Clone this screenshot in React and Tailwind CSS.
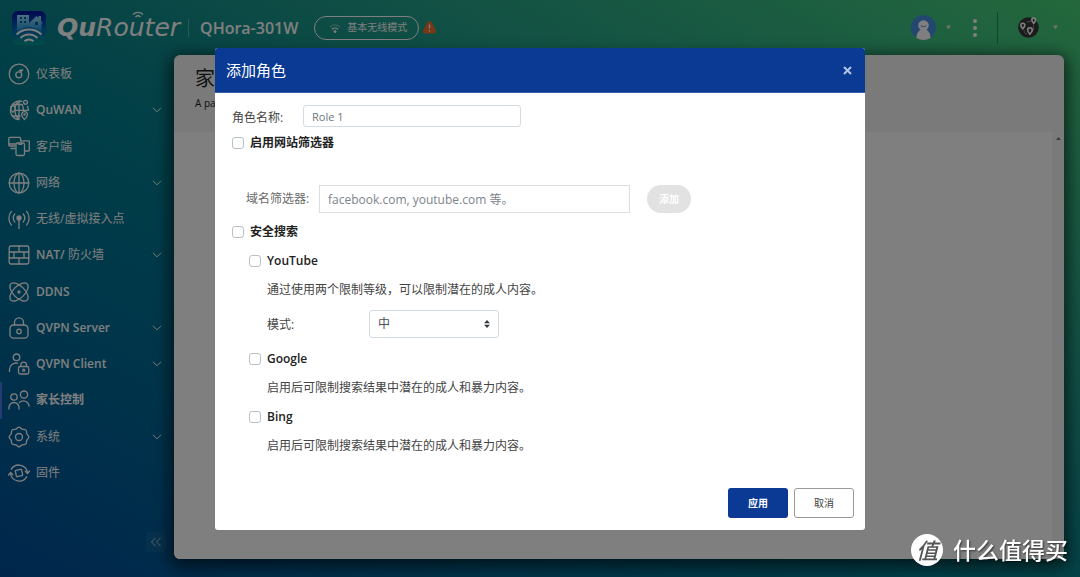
import { useState } from 'react';

const NAV = [
  { id: 'dashboard', label: '仪表板' },
  { id: 'quwan', name: 'QuWAN', expandable: true },
  { id: 'clients', label: '客户端' },
  { id: 'network', label: '网络', expandable: true },
  { id: 'wireless', label: '无线/虚拟接入点' },
  { id: 'firewall', name: 'NAT/ ', label: '防火墙', expandable: true },
  { id: 'ddns', name: 'DDNS' },
  { id: 'vpnServer', name: 'QVPN Server', expandable: true },
  { id: 'vpnClient', name: 'QVPN Client', expandable: true },
  { id: 'parental', name: '家长控制', active: true },
  { id: 'system', label: '系统', expandable: true },
  { id: 'firmware', label: '固件' },
];

const ICONS = {
  dashboard: (
    <>
      <circle cx="11" cy="11" r="9.8" />
      <circle cx="10.8" cy="11.8" r="3" />
      <path d="M12.6 9.4 14.4 7M11.5 7.400l3.200-.6" />
    </>
  ),
  quwan: (
    <>
      <path d="M14 2.300A9.300 9.300 0 1 0 11 20.600M11 2v18.600M11 2C7.800 4.500 7 8 7 11.300c0 3.500 1.200 7 4 9.300M5 5.500h9M8 11.300h12M4 17h8M19.500 7.500c.6 1.200.9 2.500.9 3.800" />
      <path d="M14 5.500c1.200 1.800 1.500 3.600 1.500 5.800" />
      <circle cx="17.500" cy="3.200" r="1.900" />
      <path d="M2.600 9.200a2.300 2.300 0 0 1 4.600 0c0 1.700-2.300 4.100-2.300 4.100S2.600 10.900 2.600 9.200z" />
      <path d="M13.600 15.600a2.900 2.900 0 0 1 5.800 0c0 2.200-2.900 5-2.900 5s-2.900-2.800-2.900-5z" />
      <circle cx="16.500" cy="15.600" r=".6" />
    </>
  ),
  clients: (
    <>
      <path d="M7 10H1.800A1 1 0 0 1 .8 9V2.400a1 1 0 0 1 1-1h9.800a1 1 0 0 1 1 1V5M.8 8h6.500M3 12.500h4" />
      <path d="M13.500 4.800h7a.8.8 0 0 1 .8.8v8.600a.8.8 0 0 1-.8.8H17" />
      <rect x="8" y="7" width="8.500" height="12.500" rx="1.400" />
      <path d="M11 7v1.400h2.500V7" />
    </>
  ),
  network: (
    <>
      <circle cx="11" cy="11" r="9.800" />
      <ellipse cx="11" cy="11" rx="5" ry="9.800" />
      <path d="M11 1.200v19.600M1.200 11h19.600" />
    </>
  ),
  wireless: (
    <>
      <circle cx="11" cy="10" r="2" fill="currentColor" />
      <path d="M11 11v9.500M6.800 6a5.800 5.800 0 0 0 0 8M15.200 6a5.800 5.800 0 0 1 0 8M3.400 3.400a10.500 10.500 0 0 0 0 13.600M18.600 3.400a10.500 10.500 0 0 1 0 13.600" />
    </>
  ),
  firewall: (
    <>
      <rect x="1.200" y="2" width="19.600" height="18" rx="1.800" />
      <path d="M1.200 8h19.600M1.200 14h19.600M11 2v6M6 8v6M16 8v6M11 14v6" />
    </>
  ),
  ddns: (
    <>
      <ellipse cx="11" cy="11" rx="11.500" ry="5.800" transform="rotate(45 11 11)" />
      <ellipse cx="11" cy="11" rx="11.500" ry="5.800" transform="rotate(-45 11 11)" />
      <circle cx="11" cy="11" r="1" fill="currentColor" />
    </>
  ),
  vpnServer: (
    <>
      <rect x="2" y="8" width="18" height="13.200" rx="3.600" />
      <path d="M6.500 8V5.300a4.500 4.500 0 0 1 9 0V8" />
      <circle cx="11" cy="14.400" r="2.200" />
    </>
  ),
  vpnClient: (
    <>
      <circle cx="8.500" cy="4.300" r="3.300" />
      <path d="M1.500 18.500v-2a6.500 6.500 0 0 1 8-6.300" />
      <rect x="10.500" y="13.500" width="10.300" height="7.500" rx="1.800" />
      <path d="M12.800 13.500v-1.400a2.900 2.900 0 0 1 5.800 0v1.400" />
      <circle cx="15.700" cy="17.200" r="1" />
    </>
  ),
  parental: (
    <>
      <circle cx="6" cy="8" r="3.200" />
      <circle cx="16" cy="5.600" r="3.600" />
      <path d="M1 20v-1.500a5 5 0 0 1 10 0V20M11.500 13.500a5.600 5.600 0 0 1 9.500 3.500" />
    </>
  ),
  system: (
    <>
      <path d="M11 1.200c1.500 0 1.800 1.400 3.200 2 1.400.5 2.600-.2 3.700.9s.4 2.300.9 3.700c.6 1.400 2 1.700 2 3.200s-1.400 1.800-2 3.200c-.5 1.400.2 2.600-.9 3.700s-2.300.4-3.700.9c-1.400.6-1.700 2-3.200 2s-1.800-1.400-3.200-2c-1.400-.5-2.600.2-3.700-.9s-.4-2.300-.9-3.700c-.6-1.400-2-1.700-2-3.200s1.400-1.800 2-3.200c.5-1.400-.2-2.600.9-3.700s2.300-.4 3.700-.9c1.400-.6 1.700-2 3.200-2z" />
      <circle cx="11" cy="11" r="3.500" />
    </>
  ),
  firmware: (
    <>
      <path d="M3.300 7.200a8.800 8.800 0 0 1 16.200 3.600M18.700 14.800A8.800 8.800 0 0 1 2.500 11.500" />
      <path d="M17.300 9.300l2.200 2.200 2-2.500M4.900 12.700 2.600 10.500.6 13" />
      <rect x="7.800" y="7.800" width="6.400" height="6.400" rx=".8" transform="rotate(-12 11 11)" />
    </>
  ),
};

function NavIcon({ name }) {
  return (
    <svg className="size-[22px] shrink-0 overflow-visible" viewBox="0 0 22 22" fill="none" stroke="currentColor" strokeWidth="1.3" strokeLinecap="round" strokeLinejoin="round" aria-hidden="true">
      {ICONS[name]}
    </svg>
  );
}

function AppLogo() {
  return (
    <svg className="size-[34px] shrink-0" viewBox="0 0 34 34" aria-hidden="true">
      <defs>
        <linearGradient id="logoBg" x1="0" y1="0" x2="0" y2="1">
          <stop offset="0" stopColor="#0012a0" />
          <stop offset="0.5" stopColor="#0060b8" />
          <stop offset="1" stopColor="#009a90" />
        </linearGradient>
        <linearGradient id="logoHouse" x1="0" y1="0" x2="0" y2="1">
          <stop offset="0" stopColor="#9fe0ff" />
          <stop offset="1" stopColor="#1090d0" />
        </linearGradient>
      </defs>
      <rect width="34" height="34" rx="6" fill="url(#logoBg)" />
      <path d="M5 4h12v8l7.500-7 2 2V5H29v5l2 2.500h-1.500V21C21 14.500 13 14.500 5 21z" fill="url(#logoHouse)" />
      <path d="M8 6h2v2H8zM12 6h2v2h-2zM8 10h2v2H8zM12 10h2v2h-2zM23 11h3v3h-3z" fill="#0058a8" />
      <path d="M4.500 23.500a18 18 0 0 1 25 0M8.500 27a12 12 0 0 1 17 0M12.500 30.300a6.500 6.500 0 0 1 9 0" fill="none" stroke="#fff" strokeWidth="2" />
    </svg>
  );
}

function Caret() {
  return (
    <svg className="h-[5px] w-[5px]" viewBox="0 0 6 5" aria-hidden="true">
      <path d="M0 0h6L3 5z" fill="#d8e4dc" />
    </svg>
  );
}

function TopBar() {
  return (
    <header className="flex h-[55px] items-center pr-[22px] pl-3 text-white">
      <AppLogo />
      <span className="relative ml-[11px] font-['DejaVu_Sans',sans-serif] text-[25px] leading-none italic">
        <b>Qu</b>Router
        <svg className="absolute -top-1 left-[75px] h-2 w-3" viewBox="0 0 12 8" fill="none" stroke="currentColor" strokeWidth="1.3" aria-hidden="true">
          <path d="M1 3.500a7 7 0 0 1 10 0M3.500 6a3.600 3.600 0 0 1 5 0" />
        </svg>
      </span>
      <span className="ml-2 h-[18px] w-px bg-white/30" />
      <span className="ml-[11px] text-[16px] font-semibold">QHora-301W</span>
      <button type="button" className="ml-4 flex h-6 items-center gap-1.5 rounded-full border border-white px-[11px] text-[10px]">
        <svg className="ml-[3px] h-2.5 w-3" viewBox="0 0 12 10" fill="none" stroke="currentColor" aria-hidden="true">
          <path d="M1 4a7 7 0 0 1 10 0" opacity=".5" />
          <path d="M3 6.300a4.300 4.300 0 0 1 6 0" strokeWidth="1.200" />
          <circle cx="6" cy="8.500" r="1" fill="currentColor" />
        </svg>
        基本无线模式
      </button>
      <svg className="ml-1 h-[13px] w-[13px]" viewBox="0 0 13 13" aria-hidden="true">
        <path d="M6.500 0c1 0 1.700.7 2.500 2l3.500 6.500c1 2.200.3 4-2 4h-8c-2.300 0-3-1.800-2-4L4 2C4.800.7 5.500 0 6.500 0z" fill="#f0702c" />
        <path d="M6.500 3.500v4M6.500 9v1.500" stroke="#fff" strokeWidth="1.400" />
      </svg>
      <div className="ml-auto flex items-center">
        <button type="button" aria-label="Account" className="flex items-center gap-2.5">
          <svg className="size-[25px]" viewBox="0 0 25 25" aria-hidden="true">
            <circle cx="12.500" cy="12.500" r="12.500" fill="#468fe0" />
            <path d="M5.500 23c0-4.500 2-7 4-8.200a5.300 5.300 0 1 1 6 0c2 1.200 4 3.700 4 8.200-4 2.600-10 2.600-14 0z" fill="#fff" />
            <path d="M9.800 10.500c1.500 1.600 3.900 1.600 5.400 0" fill="none" stroke="#468fe0" />
          </svg>
          <Caret />
        </button>
        <button type="button" aria-label="More" className="ml-[22px] flex w-1 flex-col gap-[3px]">
          <span className="size-1 rounded-full bg-white" />
          <span className="size-1 rounded-full bg-white" />
          <span className="size-1 rounded-full bg-white" />
        </button>
        <span className="ml-5 h-8 w-px bg-black/30" />
        <button type="button" aria-label="QuWAN" className="ml-5 flex items-center gap-[14px]">
          <svg className="size-[21px]" viewBox="0 0 21 21" aria-hidden="true">
            <circle cx="10.500" cy="10.500" r="10.300" fill="#363636" />
            <path d="M6 13c0 2 1 4 3 4M9 5l4-1M14 15c2-2 2-5 1-7" fill="none" stroke="#999" />
            <g fill="none" stroke="#fff" strokeWidth="1.600">
              <path d="M2.800 8.200a2 2 0 0 1 4 0c0 1.500-2 3.600-2 3.600s-2-2.100-2-3.600z" />
              <path d="M13.800 3a1.900 1.900 0 0 1 3.800 0c0 1.400-1.900 3.400-1.900 3.400S13.800 4.400 13.800 3z" />
              <path d="M9.600 13a2.300 2.300 0 0 1 4.600 0c0 1.800-2.300 4.300-2.300 4.300S9.600 14.800 9.600 13z" />
            </g>
          </svg>
          <Caret />
        </button>
      </div>
    </header>
  );
}

function Sidebar() {
  return (
    <aside className="flex w-[174px] shrink-0 flex-col justify-between text-white">
      <nav className="grid min-h-[436px] auto-rows-fr pt-px">
        {NAV.map(item => (
          <a
            key={item.id}
            href={`#${item.id}`}
            className={
              item.active
                ? 'flex items-center gap-1.5 border-l-2 border-[#4878e8] pr-3 pl-[6px] text-[12px]'
                : 'flex items-center gap-1.5 pr-3 pl-2 text-[12px]'
            }
          >
            <NavIcon name={item.id} />
            <span className="whitespace-pre">
              {item.name && <span className="font-semibold">{item.name}</span>}
              {item.label}
            </span>
            {item.expandable && (
              <svg className="ml-auto h-[6px] w-[10px]" viewBox="0 0 10 6" fill="none" stroke="currentColor" aria-hidden="true">
                <path d="M1 .8 5 4.800 9 .8" />
              </svg>
            )}
          </a>
        ))}
      </nav>
      <button type="button" aria-label="Collapse" className="mr-2 mb-[7px] flex size-5 items-center justify-center self-end rounded-sm bg-white/5 text-white/40">
        <svg className="h-2.5 w-3" viewBox="0 0 12 10" fill="none" stroke="currentColor" strokeWidth="1.200" aria-hidden="true">
          <path d="M5.500 1 1.500 5l4 4M10.500 1l-4 4 4 4" />
        </svg>
      </button>
    </aside>
  );
}

function Check({ label }) {
  return (
    <label className="flex h-[29px] items-center gap-1.5 text-[12px] font-semibold text-[#222]">
      <input type="checkbox" className="size-3 shrink-0 appearance-none rounded-[3px] border border-[#b8c0c8] bg-white checked:bg-[#0a3a94]" />
      {label}
    </label>
  );
}

function RoleDialog() {
  const [mode, setMode] = useState('medium');

  return (
    <div role="dialog" aria-modal="true" aria-labelledby="dialog-title" className="w-full max-w-[650px] overflow-hidden rounded-[3px] bg-white text-[12px] text-[#444]">
      <div className="flex h-[45px] items-center justify-between border-b border-[#3560ac] bg-[#0a3a94] pr-3 pl-[11px] text-white">
        <h2 id="dialog-title" className="text-[15px]">添加角色</h2>
        <button type="button" aria-label="Close" className="p-px">
          <svg className="size-[9px]" viewBox="0 0 9 9" stroke="#b4c4e4" strokeWidth="2" aria-hidden="true">
            <path d="M1 1l7 7M8 1 1 8" />
          </svg>
        </button>
      </div>

      <form className="px-[17px] pt-[11px]" onSubmit={e => e.preventDefault()}>
        <div className="flex h-6 items-center">
          <label htmlFor="role-name" className="w-[71px] pt-1">角色名称:</label>
          <input id="role-name" type="text" defaultValue="Role 1" className="h-[22px] w-[218px] rounded-[3px] border border-[#d5dbe2] px-2 text-[11px] text-[#6c757d]" />
        </div>
        <Check label="启用网站筛选器" />
        <div className="mt-7 flex h-7 items-center pl-[14px]">
          <label htmlFor="domain" className="w-[73px] whitespace-nowrap text-[#6a6a6a]">域名筛选器:</label>
          <input id="domain" type="text" placeholder="facebook.com, youtube.com 等。" className="h-7 w-[311px] border border-[#dadfe4] px-2 placeholder:text-[#7c858d]" />
          <button type="button" disabled className="ml-[17px] h-7 w-11 rounded-full bg-[#e2e2e2] text-[10px] font-semibold text-white">添加</button>
        </div>
        <div className="mt-1">
          <Check label="安全搜索" />
        </div>
        <div className="pl-[17px]">
          <Check label="YouTube" />
          <p className="flex h-[29px] items-center pt-px pl-[18px]">通过使用两个限制等级，可以限制潜在的成人内容。</p>
          <div className="flex h-10 items-center pl-[18px]">
            <label htmlFor="mode" className="w-[102px] pt-px">模式:</label>
            <div className="relative">
              <select id="mode" value={mode} onChange={e => setMode(e.target.value)} className="h-7 w-[130px] appearance-none rounded-[3px] border border-[#d5dbe2] bg-white px-2 text-[12px] text-[#495057]">
                <option value="medium">中</option>
                <option value="high">高</option>
              </select>
              <svg className="pointer-events-none absolute top-[10px] right-[9px] h-2 w-[6px]" viewBox="0 0 6 8" aria-hidden="true">
                <path d="M0 3.300h6L3 0zM0 4.700h6L3 8z" fill="#343a40" />
              </svg>
            </div>
          </div>
          <Check label="Google" />
          <p className="flex h-[29px] items-center pt-px pl-[18px]">启用后可限制搜索结果中潜在的成人和暴力内容。</p>
          <Check label="Bing" />
          <p className="flex h-[29px] items-center pt-px pl-[18px]">启用后可限制搜索结果中潜在的成人和暴力内容。</p>
        </div>
      </form>

      <div className="flex justify-end gap-1.5 px-[11px] pt-7 pb-3 text-[10px]">
        <button type="button" className="h-[30px] w-[60px] rounded-[3px] bg-[#0a3a94] font-semibold text-white">应用</button>
        <button type="button" className="h-[30px] w-[60px] rounded-[3px] border border-[#999] bg-white">取消</button>
      </div>
    </div>
  );
}

export default function App() {
  return (
    <div className="flex min-h-screen flex-col bg-linear-to-tr from-[#004c98] via-[#08848e] to-[#48d078] font-['Open_Sans','Noto_Sans_CJK_SC',sans-serif]">
      <TopBar />
      <div className="flex flex-1 pr-4 pb-[18px]">
        <Sidebar />
        <main className="flex flex-1 flex-col overflow-hidden rounded-md bg-[#f5f5f5] shadow-[0_4px_16px_4px_rgba(0,0,0,0.6)]">
          <div className="h-[77px] pt-2 pl-[21px] text-[#222]">
            <h1 className="text-[20px] leading-8">家</h1>
            <p className="text-[10px] leading-4">A pa</p>
          </div>
          <div className="flex flex-1">
            <div className="flex-1 rounded-tl-[3px] bg-white" />
            <div className="flex w-3 justify-center bg-[#f5f5f5] pt-[5px]">
              <svg className="h-[3px] w-[5px]" viewBox="0 0 5 3" aria-hidden="true">
                <path d="M0 3h5L2.500 0z" fill="#777" />
              </svg>
            </div>
          </div>
        </main>
      </div>

      <div className="fixed inset-0 flex items-start justify-center overflow-y-auto bg-black/50 pt-12">
        <RoleDialog />
      </div>

      <div className="pointer-events-none fixed right-3 bottom-[11px] flex items-center gap-[10px] text-white">
        <span className="flex size-8 items-center justify-center rounded-full bg-white text-[22px] leading-none font-medium text-[#555] italic">值</span>
        <span className="text-[23px] leading-none font-medium text-shadow-[1px_1px_2px_rgba(0,0,0,0.6)]">什么值得买</span>
      </div>
    </div>
  );
}
